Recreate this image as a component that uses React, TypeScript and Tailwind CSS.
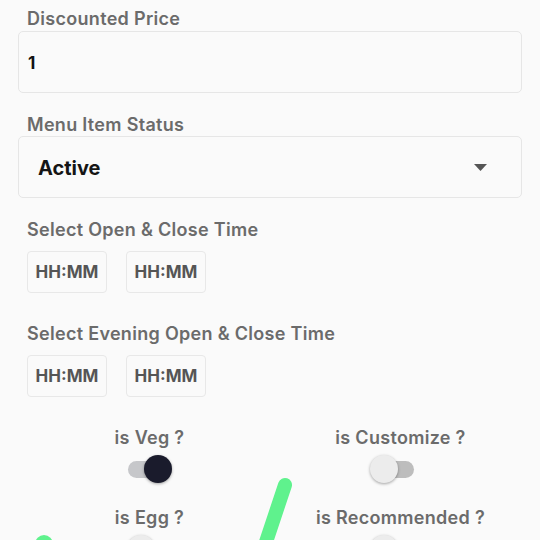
import React from "react";

const Label = ({ children, className = "" }: { children: React.ReactNode; className?: string }) => (
  <div className={`text-[18px] leading-[22px] tracking-[0.3px] font-semibold text-[#6b6b6b] ${className}`}>{children}</div>
);

const TimeBox = () => (
  <div className="w-[80px] h-[42px] flex items-center justify-center border border-[#e8e8e8] rounded-[4px] bg-[#fafafa] text-[17px] font-bold text-[#555555] pt-[1px]">
    HH:MM
  </div>
);

const Toggle = ({ on }: { on: boolean }) => (
  <div className="relative w-[43px] h-[28px] flex items-center">
    <div className={`w-[43px] h-[17px] rounded-full ${on ? "bg-[#c6c7ca]" : "bg-[#bdbdbd]"}`} />
    <div
      className={`absolute top-0 w-[28px] h-[28px] rounded-full shadow-[0_1px_3px_rgba(0,0,0,0.35)] ${
        on ? "right-[-1px] bg-[#1a1b2c]" : "left-[-1px] bg-[#ececec]"
      }`}
    />
  </div>
);

export default function App() {
  return (
    <div
      className="relative w-[540px] h-[540px] overflow-hidden bg-[#fafafa]"
      style={{ fontFamily: "Inter, 'Open Sans', sans-serif" }}
    >
      <div className="flex flex-col pt-[8px]">
        <Label className="pl-[27px]">Discounted Price</Label>
        <div className="mt-[1px] ml-[18px] w-[504px] h-[62px] border border-[#e6e6e6] rounded-[5px] flex items-center pl-[9px] pt-[3px] text-[17px] font-bold text-[#111111]">
          1
        </div>
        <Label className="pl-[27px] mt-[21px]">Menu Item Status</Label>
        <div className="ml-[18px] w-[504px] h-[62px] border border-[#e6e6e6] rounded-[5px] flex items-center justify-between pl-[19px] pr-[34px]">
          <span className="text-[20px] font-bold text-[#151515] pt-[2px]">Active</span>
          <svg width="13" height="7" viewBox="0 0 13 7">
            <path d="M0 0 L13 0 L6.5 7 Z" fill="#555555" />
          </svg>
        </div>
        <Label className="pl-[27px] mt-[21px]">Select Open &amp; Close Time</Label>
        <div className="flex gap-[19px] pl-[27px] mt-[10px]">
          <TimeBox />
          <TimeBox />
        </div>
        <Label className="pl-[27px] mt-[30px]">Select Evening Open &amp; Close Time</Label>
        <div className="flex gap-[19px] pl-[27px] mt-[10px]">
          <TimeBox />
          <TimeBox />
        </div>
        <div className="grid grid-cols-2 pl-[24px] pr-[14px] mt-[30px] gap-y-[24px]">
          <div className="flex flex-col items-center">
            <Label>is Veg ?</Label>
            <div className="mt-[6px]">
              <Toggle on={true} />
            </div>
          </div>
          <div className="flex flex-col items-center">
            <Label>is Customize ?</Label>
            <div className="mt-[6px] mr-[16px]">
              <Toggle on={false} />
            </div>
          </div>
          <div className="flex flex-col items-center">
            <Label>is Egg ?</Label>
            <div className="mt-[6px]">
              <Toggle on={false} />
            </div>
          </div>
          <div className="flex flex-col items-center">
            <Label>is Recommended ?</Label>
            <div className="mt-[6px] mr-[16px]">
              <Toggle on={false} />
            </div>
          </div>
        </div>
      </div>
      <svg className="absolute left-0 top-0 pointer-events-none" width="540" height="540" viewBox="0 0 540 540">
        <path d="M285 485 L264 548" stroke="#5ff28d" strokeWidth="14" strokeLinecap="round" fill="none" />
        <circle cx="44" cy="544" r="9" fill="#5ff28d" />
      </svg>
    </div>
  );
}
